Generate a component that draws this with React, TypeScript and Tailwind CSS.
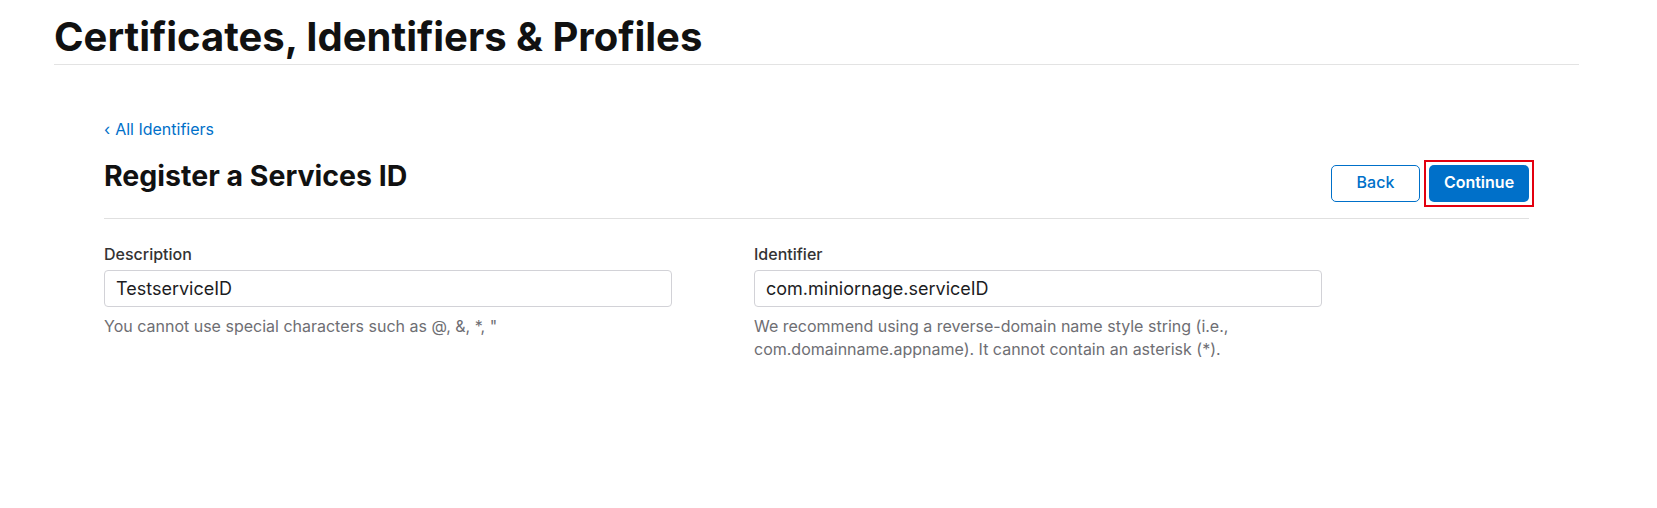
import React from "react";

export default function App() {
  return (
    <div className="min-h-[508px] bg-white" style={{ fontFamily: "Inter, 'Noto Sans', sans-serif" }}>
      <div className="ml-[54px] w-[1525px]">
        <div className="pt-[13px] pb-[3px] border-b border-[#e3e3e3]">
          <h1 className="text-[40px] leading-[48px] font-bold text-[#111111]">
            Certificates, Identifiers &amp; Profiles
          </h1>
        </div>
        <div className="px-[50px]">
          <div className="mt-[54px] text-[16px] leading-[20px] text-[#0070c9]">
            <a href="#" className="inline-flex items-center gap-[5px]">
              <span>‹</span>
              <span>All Identifiers</span>
            </a>
          </div>
          <div className="mt-[20px] flex items-start justify-between pb-[16px] border-b border-[#e0e0e0]">
            <h2 className="text-[28.5px] leading-[34px] font-bold text-[#111111]">
              Register a Services ID
            </h2>
            <div className="mt-[6px] flex items-center gap-[9px]">
              <button className="w-[89px] h-[37px] pb-[4px] rounded-[5px] border border-[#0070c9] text-[#0070c9] text-[16px] font-medium bg-white">
                Back
              </button>
              <div className="relative">
                <button className="w-[100px] h-[37px] pb-[4px] rounded-[5px] bg-[#0070c9] text-white text-[16px] font-semibold">
                  Continue
                </button>
                <span className="absolute -inset-[5px] border-2 border-[#e3000f] pointer-events-none"></span>
              </div>
            </div>
          </div>
          <div className="pt-[25px] flex">
            <div className="w-[650px]">
              <label className="block text-[16px] leading-[20px] font-medium text-[#333333]">Description</label>
              <div className="mt-[6px] w-[568px] h-[37px] rounded-[4px] border border-[#d2d2d7] flex items-center px-[11px] text-[18px] text-[#1d1d1f]">
                TestserviceID
              </div>
              <p className="mt-[8px] w-[568px] text-[16px] leading-[23px] text-[#6e6e73]">
                You cannot use special characters such as @, &amp;, *, "
              </p>
            </div>
            <div className="w-[650px]">
              <label className="block text-[16px] leading-[20px] font-medium text-[#333333]">Identifier</label>
              <div className="mt-[6px] w-[568px] h-[37px] rounded-[4px] border border-[#d2d2d7] flex items-center px-[11px] text-[18px] text-[#1d1d1f]">
                com.miniornage.serviceID
              </div>
              <p className="mt-[8px] w-[568px] text-[16px] leading-[23px] text-[#6e6e73]">
                We recommend using a reverse-domain name style string (i.e., com.domainname.appname). It cannot contain an asterisk (*).
              </p>
            </div>
          </div>
        </div>
      </div>
    </div>
  );
}
